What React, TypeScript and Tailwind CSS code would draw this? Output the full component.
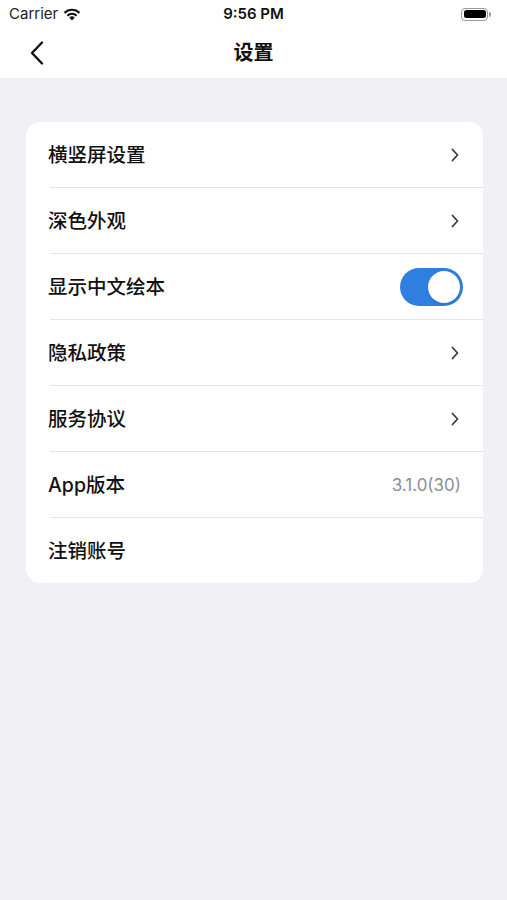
import React from 'react'

const ROWS: { label: string; kind: 'chevron' | 'toggle' | 'value' | 'none'; value?: string }[] = [
  { label: '横竖屏设置', kind: 'chevron' },
  { label: '深色外观', kind: 'chevron' },
  { label: '显示中文绘本', kind: 'toggle' },
  { label: '隐私政策', kind: 'chevron' },
  { label: '服务协议', kind: 'chevron' },
  { label: 'App版本', kind: 'value', value: '3.1.0(30)' },
  { label: '注销账号', kind: 'none' },
]

const FONT = { fontFamily: 'Inter, "Noto Sans CJK SC", sans-serif' }

function Chevron() {
  return (
    <svg width="10" height="16" viewBox="0 0 10 16" fill="none" className="mr-[3px]">
      <path d="M2.5 2.5 L7.5 8 L2.5 13.5" stroke="#3c3c43" strokeWidth="1.8" strokeLinecap="round" strokeLinejoin="round" />
    </svg>
  )
}

function Toggle() {
  return (
    <div className="w-[63px] h-[38px] rounded-full bg-[#2e7fe0] p-[3px] flex justify-end">
      <div className="w-[32px] h-[32px] rounded-full bg-white shadow" />
    </div>
  )
}

export default function App() {
  return (
    <div className="w-[507px] h-[900px] bg-[#f0f0f5] flex flex-col" style={FONT}>
      {/* status bar */}
      <div className="bg-white h-[28px] flex items-center justify-between px-[9px] relative">
        <div className="flex items-center gap-[5px] text-[15px] text-[#222]">
          <span>Carrier</span>
          <svg width="18" height="13" viewBox="0 0 18 13">
            <path d="M9 12.5 L6.3 9.6 A3.8 3.8 0 0 1 11.7 9.6 Z" fill="#111" />
            <path d="M3.6 6.9 A7.6 7.6 0 0 1 14.4 6.9 L12.9 8.5 A5.4 5.4 0 0 0 5.1 8.5 Z" fill="#111" />
            <path d="M0.8 4.1 A11.5 11.5 0 0 1 17.2 4.1 L15.7 5.7 A9.3 9.3 0 0 0 2.3 5.7 Z" fill="#111" />
          </svg>
        </div>
        <div className="absolute left-0 right-0 text-center text-[15px] font-semibold text-[#111] pointer-events-none">9:56 PM</div>
        <div className="flex items-center mr-[7px]">
          <div className="w-[27px] h-[13px] rounded-[4px] border border-[#999] p-[1.5px]">
            <div className="w-full h-full rounded-[2.5px] bg-black" />
          </div>
          <div className="w-[2px] h-[5px] bg-[#999] rounded-r-sm ml-[1px]" />
        </div>
      </div>

      {/* nav bar */}
      <div className="bg-white h-[50px] flex items-center relative">
        <div className="pl-[28px]">
          <svg width="20" height="26" viewBox="0 0 20 26" fill="none">
            <path d="M14 2.5 L4 13 L14 23.5" stroke="#111" strokeWidth="2.4" strokeLinecap="round" strokeLinejoin="round" />
          </svg>
        </div>
        <div className="absolute left-0 right-0 text-center text-[20px] font-semibold text-[#111]">设置</div>
      </div>

      {/* list */}
      <div className="ml-[26px] mr-[24px] mt-[44px] bg-white rounded-[14px] overflow-hidden">
        {ROWS.map((row, i) => (
          <div key={row.label} className="flex flex-col">
            <div className="h-[65px] flex items-center pl-[22px] pr-[20px] justify-between">
              <span className="text-[19.5px] font-medium text-[#111] pt-[2px]">{row.label}</span>
              {row.kind === 'chevron' && <Chevron />}
              {row.kind === 'toggle' && <Toggle />}
              {row.kind === 'value' && <span className="text-[17px] text-[#8e8e93] mr-[2px] pt-[2px]">{row.value}</span>}
            </div>
            {i < ROWS.length - 1 && <div className="ml-[24px] h-[1px] bg-[#e6e6ea]" />}
          </div>
        ))}
      </div>
    </div>
  )
}
